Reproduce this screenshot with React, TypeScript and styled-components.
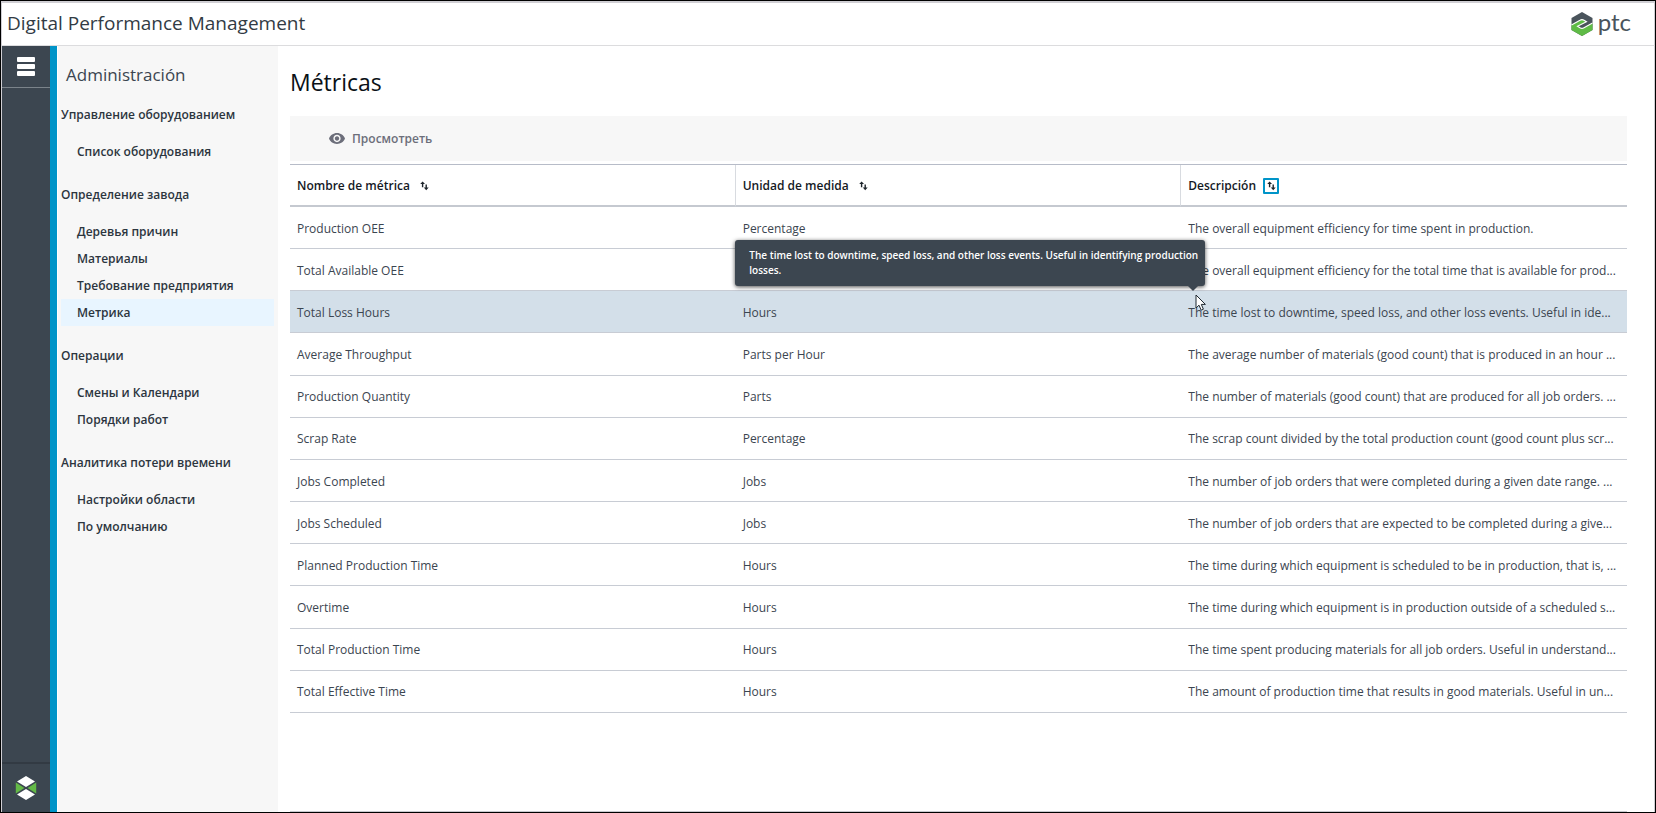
import React from "react";
import styled, { createGlobalStyle, css } from "styled-components";

const GlobalStyle = createGlobalStyle`
  *, *::before, *::after { box-sizing: border-box; }
  body {
    margin: 0;
    background: #ffffff;
    color: #3b4550;
    font-family: "Open Sans", "Noto Sans", sans-serif;
    font-size: 12px;
    line-height: 20px;
  }
  button { font: inherit; color: inherit; background: none; border: 0; padding: 0; margin: 0; cursor: pointer; }
  a { color: inherit; text-decoration: none; }
  ul { list-style: none; margin: 0; padding: 0; }
  h1, h2, h3 { margin: 0; font-weight: 400; }
  svg { display: block; }
`;

const Frame = styled.div`
  display: flex;
  flex-direction: column;
  min-height: 100vh;
  border: 1px solid #000000;
`;

const TopBar = styled.header`
  display: flex;
  align-items: center;
  justify-content: space-between;
  height: 45px;
  padding: 0 23px 0 5px;
  border: 1px solid #d0cfd4;
  border-top-width: 2px;
  border-bottom-color: #dcdcde;
`;

const ProductName = styled.div`
  padding-bottom: 2px;
  font-size: 19px;
  line-height: 26px;
  color: #323b44;
`;

const Brand = styled.a`
  display: flex;
  align-items: center;
  gap: 5px;
  color: #4a545c;
`;

const BrandName = styled.span`
  font-family: Lato, "Open Sans", sans-serif;
  font-size: 24px;
  line-height: 28px;
  padding-bottom: 4px;
`;

const Body = styled.div`
  display: flex;
  flex: 1;
  border: solid #d0cfd4;
  border-width: 0 1px;
`;

const Rail = styled.aside`
  display: flex;
  flex-direction: column;
  justify-content: space-between;
  flex: none;
  width: 55px;
  background: #3c4650;
  border-right: 7px solid #0094c8;
`;

const MenuButton = styled.button`
  display: flex;
  flex-direction: column;
  align-items: center;
  justify-content: center;
  gap: 2px;
  height: 42px;
  border-bottom: 1px solid #7b838a;
`;

const MenuBar = styled.span`
  width: 18px;
  height: 5px;
  border-radius: 1px;
  background: #ffffff;
`;

const RailFooter = styled.div`
  display: flex;
  align-items: center;
  justify-content: center;
  height: 50px;
  border-top: 2px solid #323a43;
`;

const Sidebar = styled.nav`
  flex: none;
  width: 221px;
  padding: 16px 4px 0 3px;
  background: #f7f7f7;
  border-left: 1px solid #ffffff;
`;

const SidebarTitle = styled.h2`
  padding-left: 5px;
  margin-bottom: 14px;
  font-size: 17px;
  line-height: 26px;
`;

const NavGroup = styled.section`
  margin-bottom: 17px;
`;

const NavHeading = styled.h3`
  margin-bottom: 10px;
  font-size: 12px;
  line-height: 26px;
  font-weight: 600;
  color: #2c353e;
`;

const NavLink = styled.a<{ $active: boolean }>`
  display: block;
  padding-left: 16px;
  line-height: 27px;
  font-weight: 600;
  color: #2c353e;
  background: ${(p) => (p.$active ? "#e8f5ff" : "transparent")};
`;

const Main = styled.main`
  display: flex;
  flex: 1;
  flex-direction: column;
  min-width: 0;
  padding: 20px 27px 0 12px;
`;

const PageTitle = styled.h1`
  margin-bottom: 18px;
  font-size: 23px;
  line-height: 32px;
  font-weight: 500;
  color: #0a1016;
`;

const Toolbar = styled.div`
  display: flex;
  align-items: center;
  height: 45px;
  padding-left: 39px;
  margin-bottom: 3px;
  background: #f7f7f7;
`;

const ViewButton = styled.button`
  display: flex;
  align-items: center;
  gap: 7px;
  font-weight: 600;
  color: #6c6e7a;
`;

const Table = styled.table`
  width: 100%;
  height: 549px;
  table-layout: fixed;
  border-collapse: separate;
  border-spacing: 0;
  border-top: 1px solid #b7bcc8;
`;

const HeadCell = styled.th`
  height: 42px;
  padding: 1px 7px 0;
  text-align: left;
  font-weight: 600;
  color: #14191f;
  border-bottom: 2px solid #c5c9d0;
  border-right: 1px solid #d8dbe0;
  &:last-child { border-right: 0; }
`;

const HeadContent = styled.div`
  display: flex;
  align-items: center;
  gap: 7px;
`;

const SortButton = styled.button<{ $focused: boolean }>`
  display: flex;
  align-items: center;
  justify-content: center;
  width: 16px;
  height: 16px;
  border: 2px solid ${(p) => (p.$focused ? "#0094c8" : "transparent")};
  border-radius: 1px;
`;

const Row = styled.tr<{ $selected: boolean }>`
  ${(p) => p.$selected && css`background: #d3dfe9;`}
`;

const Cell = styled.td`
  position: relative;
  height: 42px;
  padding: 2px 7px 0;
  white-space: nowrap;
  border-bottom: 1px solid #c8ccd4;
`;

const Tooltip = styled.div`
  position: absolute;
  z-index: 1;
  right: calc(100% - 24px);
  bottom: calc(100% + 5px);
  width: 470px;
  padding: 8px 0 8px 14px;
  white-space: normal;
  font-size: 10px;
  line-height: 15px;
  font-weight: 600;
  color: #ffffff;
  background: #3c4650;
  border-radius: 3px;
  box-shadow: 0 1px 4px rgba(0, 0, 0, 0.7);
  &::after {
    content: "";
    position: absolute;
    top: 100%;
    right: 7px;
    border: solid transparent;
    border-width: 5px 5px 0;
    border-top-color: #3c4650;
  }
`;

const Pointer = styled.svg`
  position: absolute;
  z-index: 2;
  left: 14px;
  top: 3px;
`;

const TableEnd = styled.hr`
  width: 100%;
  margin: auto 0 0;
  border: 0;
  border-top: 1px solid #c8c9cf;
`;

const PtcMark = () => (
  <svg width="22" height="24" viewBox="0 0 22 24" aria-hidden="true">
    <path fill="#4a545c" d="M11 0 21.5 6V18L11 24 .5 18V6z" />
    <path fill="#5fbb46" d="M.5 13 9 8.2Q11 7 13 8.2L15.5 9.8 6.5 14.2 9 15.8Q11 17 13 15.8L21.5 11V18L11 24 .5 18z" />
    <path fill="none" stroke="#ffffff" strokeWidth="1.1" d="M.5 13 9 8.2Q11 7 13 8.2L15.5 9.8 6.5 14.2 9 15.8Q11 17 13 15.8L21.5 11" />
  </svg>
);

const RailMark = () => (
  <svg width="22" height="24" viewBox="0 0 22 24" aria-hidden="true">
    <path fill="#ffffff" d="M11 0 20 5.6 11 11 2 5.6zM11 13 20 18.4 11 24 2 18.4z" />
    <path fill="#63b946" d="M.8 6.6 9.4 12 .8 17.4zM21.2 6.6 12.6 12 21.2 17.4z" />
  </svg>
);

const EyeIcon = () => (
  <svg width="16" height="11" viewBox="1 4.5 22 15" fill="currentColor" aria-hidden="true">
    <path d="M12 4.5C7 4.5 2.73 7.61 1 12c1.73 4.39 6 7.5 11 7.5s9.27-3.11 11-7.5c-1.73-4.39-6-7.5-11-7.5zM12 17c-2.76 0-5-2.24-5-5s2.24-5 5-5 5 2.24 5 5-2.24 5-5 5zm0-8c-1.66 0-3 1.34-3 3s1.34 3 3 3 3-1.34 3-3-1.34-3-3-3z" />
  </svg>
);

const SortIcon = () => (
  <svg width="9" height="10" viewBox="0 0 9 10" fill="#1d242b" aria-hidden="true">
    <path d="M2.6 .4 5 3H3.3V6.2H1.9V3H.2zM5.5 3.6H6.9V6.6H8.7L6.2 9.3 3.8 6.6H5.5z" />
  </svg>
);

const navGroups = [
  { title: "Управление оборудованием", items: ["Список оборудования"] },
  { title: "Определение завода", items: ["Деревья причин", "Материалы", "Требование предприятия", "Метрика"] },
  { title: "Операции", items: ["Смены и Календари", "Порядки работ"] },
  { title: "Аналитика потери времени", items: ["Настройки области", "По умолчанию"] },
];

const columns = ["Nombre de métrica", "Unidad de medida", "Descripción"];

const metrics = [
  ["Production OEE", "Percentage", "The overall equipment efficiency for time spent in production."],
  ["Total Available OEE", "Percentage", "The overall equipment efficiency for the total time that is available for prod..."],
  ["Total Loss Hours", "Hours", "The time lost to downtime, speed loss, and other loss events. Useful in ide..."],
  ["Average Throughput", "Parts per Hour", "The average number of materials (good count) that is produced in an hour ..."],
  ["Production Quantity", "Parts", "The number of materials (good count) that are produced for all job orders. ..."],
  ["Scrap Rate", "Percentage", "The scrap count divided by the total production count (good count plus scr..."],
  ["Jobs Completed", "Jobs", "The number of job orders that were completed during a given date range. ..."],
  ["Jobs Scheduled", "Jobs", "The number of job orders that are expected to be completed during a give..."],
  ["Planned Production Time", "Hours", "The time during which equipment is scheduled to be in production, that is, ..."],
  ["Overtime", "Hours", "The time during which equipment is in production outside of a scheduled s..."],
  ["Total Production Time", "Hours", "The time spent producing materials for all job orders. Useful in understand..."],
  ["Total Effective Time", "Hours", "The amount of production time that results in good materials. Useful in un..."],
];

const selectedMetric = "Total Loss Hours";

export default function App() {
  return (
    <>
      <GlobalStyle />
      <Frame>
        <TopBar>
          <ProductName>Digital Performance Management</ProductName>
          <Brand href="#">
            <PtcMark />
            <BrandName>ptc</BrandName>
          </Brand>
        </TopBar>
        <Body>
          <Rail>
            <MenuButton aria-label="Menu">
              <MenuBar />
              <MenuBar />
              <MenuBar />
            </MenuButton>
            <RailFooter>
              <RailMark />
            </RailFooter>
          </Rail>
          <Sidebar>
            <SidebarTitle>Administración</SidebarTitle>
            {navGroups.map((group) => (
              <NavGroup key={group.title}>
                <NavHeading>{group.title}</NavHeading>
                <ul>
                  {group.items.map((item) => (
                    <li key={item}>
                      <NavLink href="#" $active={item === "Метрика"}>{item}</NavLink>
                    </li>
                  ))}
                </ul>
              </NavGroup>
            ))}
          </Sidebar>
          <Main>
            <PageTitle>Métricas</PageTitle>
            <Toolbar>
              <ViewButton>
                <EyeIcon />
                Просмотреть
              </ViewButton>
            </Toolbar>
            <Table>
              <thead>
                <tr>
                  {columns.map((name) => (
                    <HeadCell key={name} scope="col">
                      <HeadContent>
                        {name}
                        <SortButton aria-label={name} $focused={name === "Descripción"}>
                          <SortIcon />
                        </SortButton>
                      </HeadContent>
                    </HeadCell>
                  ))}
                </tr>
              </thead>
              <tbody>
                {metrics.map(([name, unit, description]) => (
                  <Row key={name} $selected={name === selectedMetric}>
                    <Cell>{name}</Cell>
                    <Cell>{unit}</Cell>
                    <Cell>
                      {description}
                      {name === selectedMetric && (
                        <>
                          <Tooltip role="tooltip">
                            The time lost to downtime, speed loss, and other loss events. Useful in identifying production losses.
                          </Tooltip>
                          <Pointer width="12" height="18" viewBox="0 0 12 18" aria-hidden="true">
                            <path fill="#ffffff" stroke="#1f2830" strokeWidth="1" d="M1 1V14L4 11.2 6.2 16.2 8.4 15.2 6.3 10.4H10.4z" />
                          </Pointer>
                        </>
                      )}
                    </Cell>
                  </Row>
                ))}
              </tbody>
            </Table>
            <TableEnd />
          </Main>
        </Body>
      </Frame>
    </>
  );
}
